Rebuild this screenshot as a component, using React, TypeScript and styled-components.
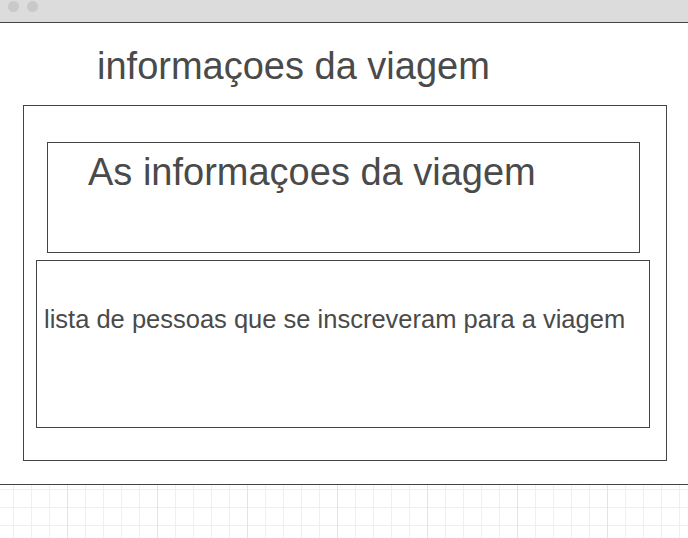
import React from "react";
import styled, { createGlobalStyle } from "styled-components";

const GlobalStyle = createGlobalStyle`
  html, body { margin: 0; padding: 0; background: #ffffff; }
  body { font-family: "Liberation Sans", Arial, sans-serif; }
  * { box-sizing: border-box; }
`;

const Window = styled.div`
  width: 688px;
  height: 538px;
  display: flex;
  flex-direction: column;
  overflow: hidden;
  background: #ffffff;
`;

const TitleBar = styled.div`
  height: 23px;
  flex: 0 0 auto;
  background: #dcdcdc;
  border-bottom: 1px solid #444444;
  display: flex;
  align-items: flex-start;
  gap: 8px;
  padding: 1px 0 0 8px;
`;

const Dot = styled.span`
  width: 11px;
  height: 11px;
  border-radius: 50%;
  background: #c9c9c9;
`;

const Content = styled.div`
  flex: 1 1 auto;
  display: flex;
  flex-direction: column;
  align-items: flex-start;
  padding-top: 21px;
`;

const PageTitle = styled.h1`
  margin: 0 0 17px 97px;
  font-size: 38px;
  line-height: 44px;
  font-weight: 400;
  color: #4a4a4a;
  white-space: nowrap;
`;

const OuterPanel = styled.div`
  margin-left: 23px;
  width: 644px;
  height: 356px;
  border: 1px solid #444444;
  display: flex;
  flex-direction: column;
  align-items: flex-start;
  padding-top: 36px;
  gap: 7px;
`;

const Frame = styled.div<{ $left: number; $width: number; $height: number; $padTop: number; $padLeft: number }>`
  margin-left: ${(p) => p.$left}px;
  width: ${(p) => p.$width}px;
  height: ${(p) => p.$height}px;
  border: 1px solid #444444;
  padding: ${(p) => p.$padTop}px 0 0 ${(p) => p.$padLeft}px;
`;

const FrameHeading = styled.h2`
  margin: 0;
  font-size: 38px;
  line-height: 44px;
  font-weight: 400;
  color: #4a4a4a;
  white-space: nowrap;
`;

const FrameText = styled.p`
  margin: 0;
  font-size: 25.5px;
  line-height: 30px;
  font-weight: 400;
  color: #4a4a4a;
  white-space: nowrap;
`;

const GridFooter = styled.div`
  flex: 0 0 54px;
  border-top: 1px solid #444444;
  background-color: #ffffff;
  background-image:
    linear-gradient(to right, #e4e4e4 1px, transparent 1px),
    linear-gradient(to right, #efefef 1px, transparent 1px),
    linear-gradient(to bottom, #efefef 1px, transparent 1px);
  background-size: 90px 100%, 18px 18px, 18px 18px;
  background-position: 67px 0, 13px 4px, 13px 4px;
`;

export default function App() {
  return (
    <>
      <GlobalStyle />
      <Window>
        <TitleBar>
          <Dot />
          <Dot />
        </TitleBar>
        <Content>
          <PageTitle>informaçoes da viagem</PageTitle>
          <OuterPanel>
            <Frame $left={23} $width={593} $height={111} $padTop={7} $padLeft={40}>
              <FrameHeading>As informaçoes da viagem</FrameHeading>
            </Frame>
            <Frame $left={12} $width={614} $height={168} $padTop={43} $padLeft={7}>
              <FrameText>lista de pessoas que se inscreveram para a viagem</FrameText>
            </Frame>
          </OuterPanel>
        </Content>
        <GridFooter />
      </Window>
    </>
  );
}
